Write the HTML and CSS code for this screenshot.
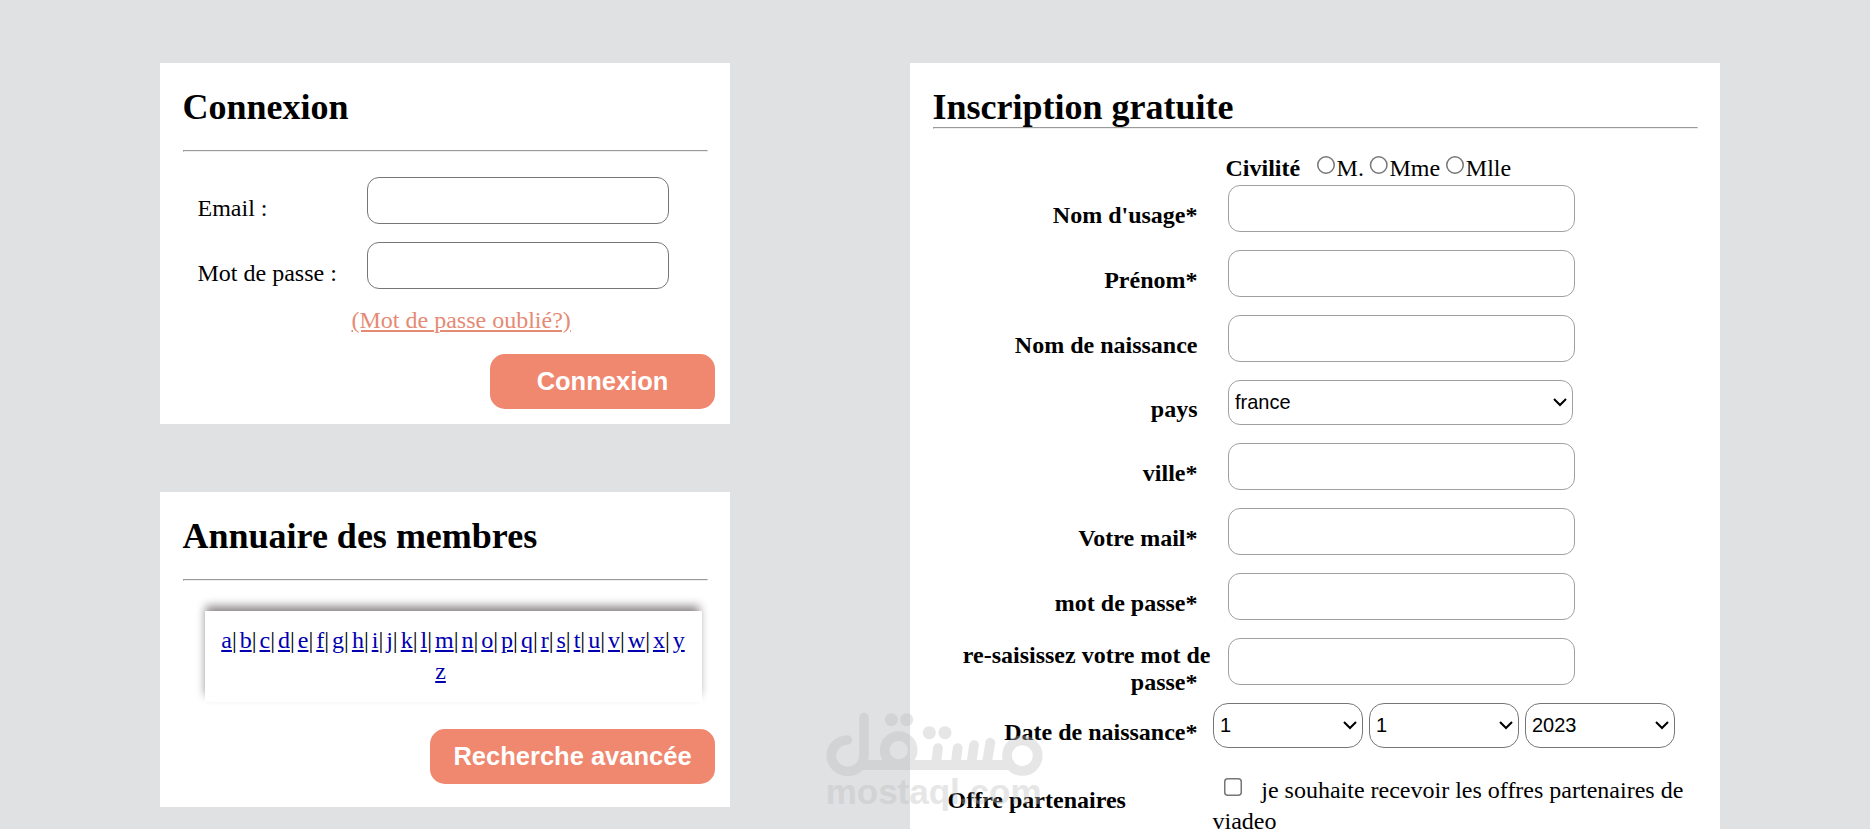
FILE: index.html
```
<!DOCTYPE html>
<html lang="fr">
    <head>
        <meta charset="utf-8">
        <title>Inscription</title>
        <link rel="stylesheet" href="styles.css">
    </head>
    <body>
        <div class="page">
            <div class="left">
                <form class="card connexion">
                    <h2>Connexion</h2>
                    <hr>
                    <div class="champ">
                        <label for="email">Email :</label>
                        <input type="text" id="email">
                    </div>
                    <div class="champ">
                        <label for="pass">Mot de passe :</label>
                        <input type="password" id="pass">
                    </div>
                    <a class="oublie" href="#">(Mot de passe oublié?)</a>
                    <button class="btn" type="button">Connexion</button>
                </form>

                <div class="card annuaire">
                    <h2>Annuaire des membres</h2>
                    <hr>
                    <div class="lettres">
                        <a href="#">a</a>|<wbr><a href="#">b</a>|<wbr><a href="#">c</a>|<wbr><a href="#">d</a>|<wbr><a href="#">e</a>|<wbr><a href="#">f</a>|<wbr><a href="#">g</a>|<wbr><a href="#">h</a>|<wbr><a href="#">i</a>|<wbr><a href="#">j</a>|<wbr><a href="#">k</a>|<wbr><a href="#">l</a>|<wbr><a href="#">m</a>|<wbr><a href="#">n</a>|<wbr><a href="#">o</a>|<wbr><a href="#">p</a>|<wbr><a href="#">q</a>|<wbr><a href="#">r</a>|<wbr><a href="#">s</a>|<wbr><a href="#">t</a>|<wbr><a href="#">u</a>|<wbr><a href="#">v</a>|<wbr><a href="#">w</a>|<wbr><a href="#">x</a>|<wbr><a href="#">y</a>
                        <a class="z" href="#">z</a>
                    </div>
                    <button class="btn large" type="button">Recherche avancée</button>
                </div>
            </div>

            <form class="card inscription">
                <h2>Inscription gratuite</h2>
                <hr>
                <div class="civilite">
                    <b>Civilité</b>
                    <label><input type="radio" name="civ">M.</label>
                    <label><input type="radio" name="civ">Mme</label>
                    <label><input type="radio" name="civ">Mlle</label>
                </div>
                <div class="ligne">
                    <div class="nom"><label for="usage">Nom d'usage*</label></div>
                    <input type="text" id="usage">
                </div>
                <div class="ligne">
                    <div class="nom"><label for="prenom">Prénom*</label></div>
                    <input type="text" id="prenom">
                </div>
                <div class="ligne">
                    <div class="nom"><label for="naissance">Nom de naissance</label></div>
                    <input type="text" id="naissance">
                </div>
                <div class="ligne pays">
                    <div class="nom"><label for="pays">pays</label></div>
                    <select id="pays"><option>france</option></select>
                </div>
                <div class="ligne">
                    <div class="nom"><label for="ville">ville*</label></div>
                    <input type="text" id="ville">
                </div>
                <div class="ligne">
                    <div class="nom"><label for="mail">Votre mail*</label></div>
                    <input type="text" id="mail">
                </div>
                <div class="ligne">
                    <div class="nom"><label for="mdp">mot de passe*</label></div>
                    <input type="password" id="mdp">
                </div>
                <div class="ligne double">
                    <div class="nom"><label for="mdp2">re-saisissez votre mot de passe*</label></div>
                    <input type="password" id="mdp2">
                </div>
                <div class="ligne date">
                    <div class="nom"><label>Date de naissance*</label></div>
                    <div class="dates">
                        <select><option>1</option></select>
                        <select><option>1</option></select>
                        <select><option>2023</option></select>
                    </div>
                </div>
                <div class="ligne offre">
                    <b>Offre partenaires</b>
                    <p><input type="checkbox">je souhaite recevoir les offres partenaires de viadeo</p>
                </div>
            </form>
        </div>

        <svg class="filigrane" viewBox="0 0 780 417">
            <g fill="none" stroke="#bebebe" stroke-width="29" stroke-linecap="round" stroke-linejoin="round">
                <path d="M162 83V197A49 47 0 1 1 112 150"/>
                <path d="M152 225H610" stroke-linecap="butt" stroke-width="30"/>
                <circle cx="266" cy="180" r="42"/>
                <path d="M384 174L378 222M443 174L437 222M492 165L484 222M541 158L530 222"/>
                <circle cx="637" cy="197" r="46"/>
            </g>
            <g fill="#bebebe">
                <circle cx="244" cy="89" r="19.5"/>
                <circle cx="290" cy="89" r="19.5"/>
                <circle cx="358" cy="128" r="19.5"/>
                <circle cx="405" cy="128" r="19.5"/>
                <text x="47" y="343">mostaql.com</text>
            </g>
        </svg>
    </body>
</html>
```
FILE: styles.css
```
body {
    margin: 0;
    height: 829px;
    overflow: hidden;
    position: relative;
    background-color: #e0e1e3;
    font-family: "Liberation Serif", "Times New Roman", serif;
    font-size: 24px;
    line-height: 28px;
}

* {
    box-sizing: border-box;
}

.page {
    display: flex;
    align-items: flex-start;
    gap: 180px;
    padding: 63px 0 0 160px;
}

.left {
    display: flex;
    flex-direction: column;
    gap: 68px;
    width: 570px;
}

.card {
    display: flex;
    flex-direction: column;
    background-color: white;
    padding: 23px 15px 15px 22.5px;
}

h2 {
    margin: 0;
    font-size: 36px;
    line-height: 42px;
}

hr {
    align-self: stretch;
    height: 2px;
    margin: 22px 7px 25px 0;
    border: 1px solid #eeeeee;
    border-top-color: #9a9a9a;
    border-left-color: #9a9a9a;
}

input[type=text],
input[type=password] {
    height: 47px;
    border: 1px solid #767676;
    border-radius: 12px;
    background-color: white;
}

/* connexion */

.champ {
    display: flex;
    align-items: flex-start;
    padding-left: 15px;
    margin-bottom: 18px;
}

.champ label {
    width: 169px;
    padding-top: 17px;
}

.champ input {
    width: 302px;
}

.oublie {
    align-self: flex-start;
    margin: -1px 0 20px 169px;
    color: #e58a74;
    text-decoration-color: #e58a74;
}

.btn {
    align-self: flex-end;
    width: 225px;
    height: 55px;
    border: none;
    border-radius: 15px;
    background-color: #f0876f;
    color: white;
    font-family: "Liberation Sans", Arial, sans-serif;
    font-size: 25.5px;
    font-weight: bold;
}

.large {
    width: 285px;
}

/* annuaire */

.annuaire {
    padding-bottom: 23px;
}

.annuaire hr {
    margin-bottom: 30px;
}

.lettres {
    width: 497px;
    height: 91px;
    margin: 0 0 27px 22px;
    padding: 14px 14px 0;
    line-height: 31px;
    text-align: center;
    box-shadow: -1.5px -6px 9px -1px #8c8688;
}

.lettres a {
    color: #0000b0;
    margin-left: 3px;
}

.lettres a:first-child {
    margin-left: 0;
}

.lettres .z {
    margin: 0 25px 0 0;
}

/* inscription */

.inscription {
    width: 810px;
    height: 800px;
}

.inscription hr {
    margin-top: -1px;
}

.civilite {
    display: flex;
    height: 31px;
    padding-left: 293px;
}

.civilite b {
    width: 91px;
}

.civilite label {
    display: flex;
    align-items: flex-start;
    margin-right: 5.5px;
}

.civilite input {
    zoom: 1.5;
    margin: 1px .4px 0 0;
}

.ligne {
    display: flex;
    align-items: flex-start;
    height: 65px;
}

.nom {
    width: 278px;
    padding-top: 17px;
    line-height: 27px;
    font-weight: bold;
    text-align: right;
}

.nom label {
    padding-right: 13px;
}

.ligne > input {
    width: 347px;
    margin-left: 17.5px;
    border-color: #a0a0a0;
}

select {
    zoom: 1.5;
    width: 100px;
    height: 30px;
    padding-bottom: 1px;
    border: 1px solid #767676;
    border-radius: 10px;
    background-color: white;
    color: black;
    font-family: "Liberation Sans", Arial, sans-serif;
    font-size: 13.333px;
}

.pays {
    height: 63px;
}

.pays .nom {
    padding-top: 16px;
}

.pays select {
    width: 230px;
    margin-left: 11.667px;
    border-color: #a0a0a0;
    border-radius: 8px;
}

.double {
    height: 65px;
}

.double .nom {
    padding-top: 4px;
}

.date {
    height: 72px;
}

.date .nom {
    padding-top: 16px;
}

.dates {
    display: flex;
    gap: 6px;
    margin-left: 2.5px;
}

.offre b {
    width: 265px;
    margin-left: 15px;
    padding-top: 11px;
}

.offre p {
    width: 490px;
    margin: 0;
    line-height: 31px;
}

.offre input {
    zoom: 1.5;
    margin: 0 12px 0 7.5px;
    vertical-align: 0.5px;
}

.filigrane {
    position: absolute;
    left: 810px;
    top: 690px;
    width: 260px;
    height: 139px;
    opacity: .38;
}

.filigrane text {
    font-family: "Liberation Sans", Arial, sans-serif;
    font-size: 105px;
    font-weight: bold;
}
```
